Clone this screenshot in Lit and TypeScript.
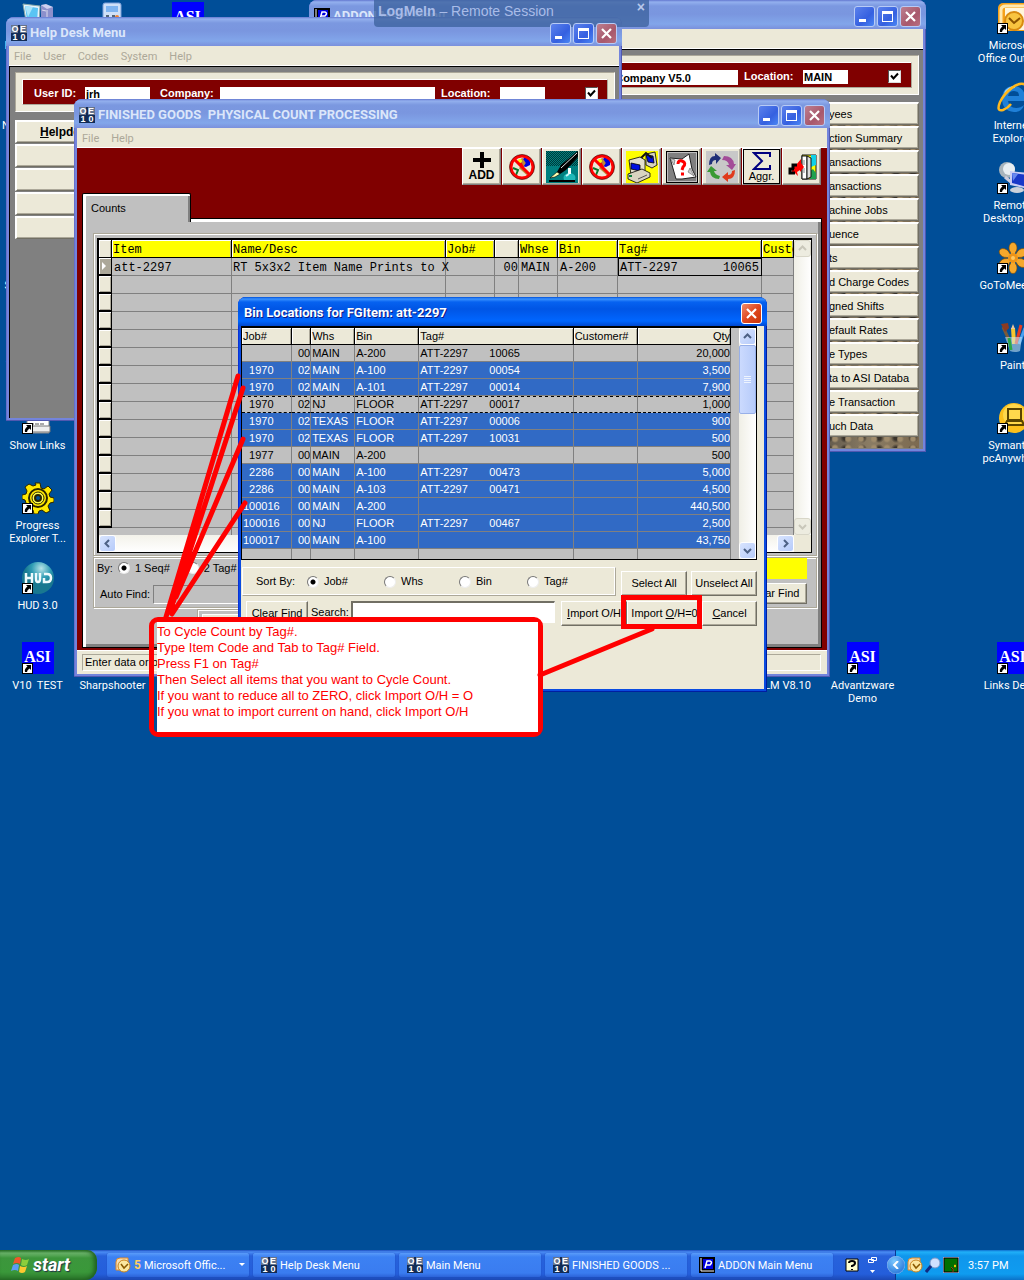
import { LitElement, html, svg, css, nothing, TemplateResult } from "lit";
import { customElement, state } from "lit/decorators.js";
import { classMap } from "lit/directives/class-map.js";
import { styleMap } from "lit/directives/style-map.js";

interface DesktopItem { col: number; row: number; label: string; icon: string; shortcut?: boolean; }
interface BinRow { job: string; seq: string; whs: string; bin: string; tag: string; num: string; qty: string; on: boolean; focus?: boolean; }

const DESKTOP: DesktopItem[] = [
  { col: 1, row: 1, label: "IE Computers", icon: "computer" },
  { col: 2, row: 1, label: "", icon: "calc" },
  { col: 3, row: 1, label: "", icon: "asi" },
  { col: 1, row: 2, label: "Network Place", icon: "none" },
  { col: 1, row: 4, label: "Sharpshooter", icon: "none" },
  { col: 1, row: 5, label: "V10 Live Site", icon: "none" },
  { col: 1, row: 6, label: "Show Links", icon: "page", shortcut: true },
  { col: 1, row: 7, label: "Progress Explorer T...", icon: "gear", shortcut: true },
  { col: 1, row: 8, label: "HUD 3.0", icon: "hud", shortcut: true },
  { col: 1, row: 9, label: "V10  TEST", icon: "asi", shortcut: true },
  { col: 2, row: 9, label: "Sharpshooter", icon: "none" },
  { col: 11, row: 9, label: "LM V8.10", icon: "none" },
  { col: 12, row: 9, label: "Advantzware Demo", icon: "asi", shortcut: true },
  { col: 14, row: 1, label: "Microsoft Office Outlook", icon: "outlook", shortcut: true },
  { col: 14, row: 2, label: "Internet Explorer", icon: "ie" },
  { col: 14, row: 3, label: "Remote Desktop C...", icon: "remote", shortcut: true },
  { col: 14, row: 4, label: "GoToMeeting", icon: "flower", shortcut: true },
  { col: 14, row: 5, label: "Paint", icon: "paint", shortcut: true },
  { col: 14, row: 6, label: "Symantec pcAnywhere", icon: "symantec", shortcut: true },
  { col: 14, row: 9, label: "Links Demo", icon: "asi", shortcut: true },
];

const BINS: BinRow[] = [
  ["", "00", "MAIN", "A-200", "ATT-2297", "10065", "20,000", 0],
  ["1970", "02", "MAIN", "A-100", "ATT-2297", "00054", "3,500", 1],
  ["1970", "02", "MAIN", "A-101", "ATT-2297", "00014", "7,900", 1],
  ["1970", "02", "NJ", "FLOOR", "ATT-2297", "00017", "1,000", 2],
  ["1970", "02", "TEXAS", "FLOOR", "ATT-2297", "00006", "900", 1],
  ["1970", "02", "TEXAS", "FLOOR", "ATT-2297", "10031", "500", 1],
  ["1977", "00", "MAIN", "A-200", "", "", "500", 0],
  ["2286", "00", "MAIN", "A-100", "ATT-2297", "00473", "5,000", 1],
  ["2286", "00", "MAIN", "A-103", "ATT-2297", "00471", "4,500", 1],
  ["100016", "00", "MAIN", "A-200", "", "", "440,500", 1],
  ["100016", "00", "NJ", "FLOOR", "ATT-2297", "00467", "2,500", 1],
  ["100017", "00", "MAIN", "A-100", "", "", "43,750", 1],
].map((r) => ({
  job: r[0] as string, seq: r[1] as string, whs: r[2] as string, bin: r[3] as string,
  tag: r[4] as string, num: r[5] as string, qty: r[6] as string, on: r[7] === 1, focus: r[7] === 2,
}));

const ADDON_BUTTONS = ["yees", "ction Summary", "ansactions", "ansactions", "achine Jobs", "uence", "ts",
  "d Charge Codes", "gned Shifts", "efault Rates", "e Types", "ta to ASI Databa", "e Transaction", "uch Data"];

const box = (n: number, body: unknown) => html`<svg class="ico" width=${n} height=${n} viewBox="0 0 ${n} ${n}" aria-hidden="true">${body}</svg>`;

const ICONS: Record<string, () => TemplateResult | typeof nothing> = {
  none: () => html`<span class="blank"></span>`,
  asi: () => html`<span class="asi">ASI</span>`,
  computer: () => box(32, svg`<path d="M1 2l17 2-1 18-13-3z" fill="#e8f2fa" stroke="#8aa"/><path d="M3 4l13 2-1 14-10-2z" fill="#5ac4f4"/><path d="M3 4l8 1-5 10z" fill="#a8e4fc"/><path d="M19 3l12 2v20l-12-4z" fill="#8c90cc"/><path d="M19 3l5-1 7 3-6 2z" fill="#cdd0f0"/><path d="M25 8v14M20 8l4 1" stroke="#dde" />`),
  calc: () => box(32, svg`<rect x="6" y="1" width="18" height="28" rx="2" fill="#cfe0f8" stroke="#7da0da"/><rect x="9" y="4" width="12" height="6" fill="#7fb4f0"/><path d="M9 14h3m3 0h3M9 18h3" stroke="#567" stroke-width="2"/><circle cx="20" cy="15" r="2" fill="#f08030"/>`),
  page: () => box(32, svg`<path d="M5 5h22v26H5z" fill="#fff" stroke="#888"/><path d="M8 10h16M8 14h16M8 18h16M8 22h14" stroke="#555" stroke-dasharray="4 1"/><path d="M3 24h25v6H3z" fill="#eee" stroke="#777"/>`),
  gear: () => box(32, svg`<g fill="#ffe800" stroke="#2a2400"><path d="M13 1h5l1 5 3 1 4-3 4 4-3 4 1 3 4 1v4l-4 1-2 3 2 5-4 2-4-3-3 1-1 3h-4l-1-4-4-1-4 2-2-4 3-4-1-3-3-1v-4l4-1 1-3-2-4 4-3 4 2 3-1z"/><circle cx="16" cy="16" r="9" stroke-width="2"/><circle cx="16" cy="16" r="6" fill="#ffff50"/><circle cx="16" cy="16" r="3" fill="#004e98" stroke-width="2"/></g>`),
  hud: () => box(32, svg`<defs><radialGradient id="hg" cx=".6" cy=".2"><stop offset="0" stop-color="#b8e4e8"/><stop offset=".6" stop-color="#2e9cb4"/><stop offset="1" stop-color="#187890"/></radialGradient></defs><circle cx="16" cy="16" r="16" fill="url(#hg)"/><path d="M4 11v10M4 16h5M10 11v10M14 11v6q0 3 2 3t2-3v-6M22 12h3q4 0 4 4t-4 4h-3v-4" fill="none" stroke="#eefafc" stroke-width="2.500"/>`),
  outlook: () => box(32, svg`<rect x="1" y="1" width="30" height="28" rx="5" fill="#f5a21c"/><path d="M8 6h24v22H8z" fill="#fff6dc"/><path d="M4 22V8q0-4 5-4h20" fill="none" stroke="#ffe9b0" stroke-width="3"/><circle cx="17" cy="19" r="9" fill="#f8c440" stroke="#d88a10" stroke-width="2"/><path d="M12 16l5 5 6-5" fill="none" stroke="#8a5200" stroke-width="2"/>`),
  ie: () => box(32, svg`<path d="M28 19H11q1 7 8 7 5 0 8-3-2 7-10 7Q5 29 5 16 6 4 17 4q12 1 11 15zM11 14h11q0-5-5-5t-6 5z" fill="#1f80d8"/><path d="M8 11q3-6 10-6" stroke="#9ad4ff" stroke-width="2" fill="none"/><path d="M29 3C21-2 8 10 3 20q-4 10 3 8 5-2 8-6" fill="none" stroke="#ffb81c" stroke-width="2.500"/>`),
  remote: () => box(32, svg`<ellipse cx="10" cy="8" rx="8" ry="8" fill="#a8b4bc"/><ellipse cx="12" cy="7" rx="6" ry="6" fill="#e8eef2"/><path d="M8 15l6 5" stroke="#ccd" stroke-width="3"/><path d="M13 9l18 2v16l-18-4z" fill="#c8ccf4"/><path d="M15 11l15 2v12l-15-4z" fill="#1838c8"/><path d="M15 11l6 1-5 7z" fill="#6888f0"/><ellipse cx="20" cy="28" rx="7" ry="3" fill="#ccd2da"/>`),
  flower: () => box(32, svg`<g fill="#f6a82c" stroke="#7a4800" stroke-width=".6">${[0, 60, 120, 180, 240, 300].map((a) => svg`<ellipse cx="16" cy="6" rx="4" ry="5.500" transform="rotate(${a} 16 16)"/>`)}</g><g stroke="#f6a82c" stroke-width="4">${[0, 60, 120].map((a) => svg`<path d="M16 9v14" transform="rotate(${a} 16 16)"/>`)}</g><circle cx="16" cy="16" r="5" fill="#ee9418"/><circle cx="16" cy="16" r="2" fill="#ffc860"/>`),
  paint: () => box(32, svg`<path d="M6 5l7 15" stroke="#7a5a38" stroke-width="3"/><path d="M4 2l7-1 1 5-4 4z" fill="#8b3b22"/><path d="M16 6l1 16" stroke="#f6c52e" stroke-width="4"/><path d="M14 7l2-5 2 5z" fill="#e8c8a0"/><path d="M24 3l-5 19" stroke="#e43b20" stroke-width="3"/><path d="M28 6l-6 16" stroke="#49a0f0" stroke-width="3"/><path d="M8 15h17l-2 14q-5 2-10 0z" fill="#cfeaf4" opacity=".55"/><path d="M12 16l2 12" stroke="#28a848" stroke-width="3"/>`),
  symantec: () => box(32, svg`<circle cx="17" cy="16" r="15" fill="#fcc01c"/><circle cx="17" cy="13" r="11" fill="#ffd84c"/><rect x="11" y="7" width="13" height="11" fill="none" stroke="#5a4400" stroke-width="2"/><path d="M10 19h15l2 4H8z" fill="none" stroke="#5a4400" stroke-width="2"/>`),
  oe: () => box(16, svg`<rect width="16" height="16" fill="#122c56"/><path d="M0 0h7v8H0zM9 0h7v8H9z" fill="#66748e"/><g font-family="Liberation Sans" font-size="9" font-weight="700" fill="#fff" text-anchor="middle"><text x="4" y="7">O</text><text x="12" y="7">E</text><text x="4" y="15">1</text><text x="12" y="15">0</text></g>`),
  pro: () => box(16, svg`<rect width="16" height="16" fill="#000"/><path d="M2 1v13h13" fill="none" stroke="#fff"/><rect x="4" y="2" width="10" height="10" fill="#0000e0"/><path d="M6 11l2-7h3q3 1 0 4H7" fill="none" stroke="#fff" stroke-width="1.500"/>`),
  mail: () => box(16, svg`<path d="M1 5q0-4 4-4h8v12H1z" fill="#f6ddb0" stroke="#e08a28"/><circle cx="9" cy="9" r="6" fill="#fbe7a0" stroke="#c88420"/><path d="M6 7l3 4 4-4" stroke="#8a5800" stroke-width="1.500" fill="none"/>`),
  flag: () => box(20, svg`<path d="M5 3q4-2 6 0L10 9Q7 7 3 9z" fill="#f0562a"/><path d="M12 4q4 2 7 0l-2 6q-3 2-6 0z" fill="#8cce3c"/><path d="M3 10q4-2 6 0L8 16Q5 14 1 16z" fill="#5c9cf4"/><path d="M10 11q4 2 7 0l-2 6q-3 2-6 0z" fill="#fcc830"/>`),
  no: () => box(32, svg`<path d="M15 10l4-4 5 3v5l-4 2-4-1z" fill="#0000e0"/><path d="M12 12l4-3 2 3-3 5 7 6" fill="none" stroke="#c0863a" stroke-width="3"/><path d="M14 11l3 5" stroke="#f00" stroke-width="2"/><circle cx="14" cy="10" r="2" fill="#ff0"/><path d="M7 17l5 2-2 5" stroke="#087a30" stroke-width="2" fill="none"/><circle cx="16" cy="16" r="11" fill="none" stroke="#f00" stroke-width="3"/><path d="M8.500 8.500l15 15" stroke="#f00" stroke-width="3"/><circle cx="16" cy="16" r="12.500" fill="none" stroke="#300" stroke-width=".6"/>`),
  pen: () => box(32, svg`<defs><pattern id="dt" width="2" height="2" patternUnits="userSpaceOnUse"><rect width="2" height="2" fill="#008080"/><path d="M0 0h1v1H0zM1 1h1v1H1z" fill="#003838"/></pattern></defs><rect width="32" height="32" fill="#008080"/><rect width="32" height="15" fill="url(#dt)"/><path d="M32 0L15 14l-4 7 3 2 6-4L32 6z" fill="#000"/><path d="M31 2L15 17" stroke="#d8e0e0"/><path d="M11 21l3 2-5 3-5 1z" fill="#ffffb0" stroke="#000" stroke-width=".6"/><path d="M3 30h26" stroke="#000" stroke-width="2"/><path d="M18 29q-2-5 4-7h3q6 2 4 7z" fill="#20b8b8"/><path d="M22 17h3v6h-3z" fill="#fff"/><path d="M20 25l3-2" stroke="#c8f8f8" stroke-width="2"/>`),
  pc: () => box(32, svg`<rect width="32" height="32" fill="#ff0"/><g stroke="#000" stroke-width=".8"><path d="M20 3l9-2 2 13-5 3-6-3z" fill="#d8d4c0"/><path d="M20 4l7 1 1 7-6-1z" fill="#0010e0"/><path d="M14 8l6-6 6 5" fill="none" stroke="#111" stroke-width="2"/><path d="M3 9l11-3 5 3v13l-14 2z" fill="#e4e0cc"/><path d="M5 12l9 2v6l-9-2z" fill="#0010e0"/><path d="M2 23l14-5 8 4v4l-13 6-9-4z" fill="#d8d4c0"/></g><path d="M3 25h3" stroke="#0a8040" stroke-width="2"/><path d="M12 28l9-4" stroke="#555"/>`),
  ask: () => box(32, svg`<path d="M0 0h32v32H0z" fill="#000"/><path d="M1 1h30v30H1z" fill="#c0c0c0"/><path d="M2 2h28v28H2z" fill="#808080"/><path d="M4 7l12 1 7-5 3 15 4 8-14 2-6 0z" fill="#fff" stroke="#222"/><path d="M24 17l4 8-6-4zM4 7l5 2-1 5z" fill="#ccc" stroke="#444" stroke-width=".5"/><path d="M12 13q0-4 4-3 5 2 1 6l-1 3M15 23h3" fill="none" stroke="#f00" stroke-width="3"/>`),
  cycle: () => box(32, svg`<rect width="32" height="32" fill="#c8c8c8"/><path d="M3 14Q3 5 9 5V2l6 5-5 6V9Q6 9 6 13z" fill="#1f2f78"/><path d="M18 5q9 0 10 8h2l-4 6-6-5h3q-1-5-7-5z" fill="#a34c98"/><path d="M29 19q0 9-7 9v3l-6-5 6-5v3q4 0 4-4z" fill="#e03a1c"/><path d="M13 28q-8 0-9-7H1l4-6 6 5H8q1 4 6 5z" fill="#3a9a34"/>`),
  door: () => box(32, svg`<path d="M16 4h14v24H16z" fill="#ff0" stroke="#111"/><path d="M25 4h5v10l-5 2z" fill="#10d0e8"/><path d="M24 20l3-2 3 4v6h-6z" fill="#20a050"/><path d="M16 5h5v23h-5z" fill="#fff" stroke="#111"/><path d="M21 5l4 2v19l-4 2z" fill="#ddd" stroke="#111"/><path d="M18 9v14" stroke="#888" stroke-dasharray="5 3"/><path d="M10 14l5-6v4l3 4-4 5v-2l-3 2 1 4-3-3-3-1v-6z" fill="#f00"/><path d="M11 14H7v4H8M7 18H4v4h5" fill="none" stroke="#000" stroke-width="3"/>`),
  help: () => box(16, svg`<path d="M3 2h12v12H3z" fill="#ffffd0" stroke="#000"/><path d="M6 6q0-2 3-2t3 2q0 2-3 3v1M9 12v1" fill="none" stroke="#000" stroke-width="2"/>`),
  glass: () => box(16, svg`<circle cx="10" cy="6" r="5" fill="#cfe0ff" stroke="#7f98c8"/><path d="M6 9l-5 6" stroke="#122a80" stroke-width="3"/>`),
  screen: () => box(16, svg`<rect width="16" height="16" fill="#dce"/><rect x="1" y="1" width="14" height="14" fill="#007000" stroke="#000"/><path d="M8 10l2 2v3M12 7v4" stroke="#a03c10"/><circle cx="12" cy="9" r="1" fill="#ff0"/>`),
};

@customElement("app-root")
export class AppRoot extends LitElement {
  @state() private sort = "Job#";

  static styles = css`
    :host { display: flex; flex-direction: column; min-height: 100vh; background: #004e98; font: 11px/13px "Liberation Sans", Arial, sans-serif; color: #000; overflow: hidden; }
    *, *::before, *::after { box-sizing: border-box; }
    button, input { font: inherit; color: inherit; margin: 0; padding: 0; border: 0; border-radius: 0; background: none; outline: none; }
    svg { display: block; flex: none; }
    u { text-underline-offset: 1px; }
    .desktop { position: relative; flex: 1; overflow: hidden; }
    .grid { display: grid; grid-template-columns: repeat(14, 75px); grid-auto-rows: 80px; padding-top: 2px; }
    .item { display: flex; flex-direction: column; align-items: center; gap: 5px; color: #fff; font: 11px/13px Roboto, Tahoma, sans-serif; text-align: center; white-space: pre-wrap; text-decoration: none; }
    .pic { position: relative; width: 32px; height: 32px; }
    .cut { position: absolute; left: 0; bottom: 0; background: #fff; border: 1px solid #000; }
    .blank { display: block; width: 32px; height: 32px; }
    .asi { display: block; width: 32px; height: 32px; background: #00f; color: #fff; font: 700 16px/30px "Liberation Serif", serif; text-align: center; }

    .win { position: absolute; display: flex; flex-direction: column; padding: 0 3px 3px; border-radius: 8px 8px 0 0; background: #7384dc; box-shadow: inset -1px -1px #5058b0, inset 1px 0 #6670cc; }
    .titlebar { display: flex; align-items: center; gap: 2px; height: 29px; margin: 0 -3px; padding: 3px 5px 0; border-radius: 8px 8px 0 0; background: linear-gradient(#6478d0 0, #93b0ee 2px, #7b98e0 6px, #7a96df 14px, #82a6ea 24px, #7a90dc 29px); }
    .caption { flex: 1; padding-left: 1px; font: 700 13px/16px Roboto, "Trebuchet MS", sans-serif; color: #dbe6fa; white-space: pre; }
    .tbtn { display: flex; align-items: center; justify-content: center; width: 21px; height: 21px; border: 1px solid #b8cbf6; border-radius: 3px; background: linear-gradient(135deg, #5c82ec, #3560e0 60%, #4a86f4); }
    .tbtn.x { background: linear-gradient(135deg, #bd7f90, #a8586c 60%, #b96f80); }
    .menubar { display: flex; gap: 12px; height: 20px; padding: 2px 5px 0; background: #ece9d8; border-bottom: 1px solid #fff; color: #aca899; font: 11px/13px Roboto, Tahoma, sans-serif; }
    .gray { flex: 1; background: #808080; border: solid #000; border-width: 1px 0 0 1px; padding: 5px 4px 0 5px; }
    .card { height: 40px; padding: 6px; background: #ece9d8; border: 1px solid; border-color: #aca899 #fff #fff #aca899; }
    .login { display: grid; grid-template-columns: 51px 75px 60px 221px 59px 85px 13px; height: 26px; padding: 7px 0 0 11px; background: #800000; border: 1px solid; border-color: #fff #aca899 #aca899 #fff; color: #fff; font-weight: 700; white-space: nowrap; }
    .login input[type="text"] { height: 14px; padding-left: 1px; background: #fff; color: #000; }
    .w65 { width: 65px; } .w215 { width: 215px; } .w45 { width: 45px; }
    .login input.far { text-align: right; padding-right: 47px; height: 15px; }
    .check { position: relative; display: block; appearance: none; width: 13px; height: 13px; background: #fff url("data:image/svg+xml,%3Csvg xmlns='http://www.w3.org/2000/svg' viewBox='0 0 11 11'%3E%3Cpath d='M2 4.500l2.500 3L9 2.500' fill='none' stroke='%23000' stroke-width='2'/%3E%3C/svg%3E") center/11px; border: 1px solid; border-color: #555 #ddd #ddd #555; }
    .btn { display: flex; align-items: center; justify-content: center; background: #ece9d8; border: 1px solid; border-color: #fff #716f64 #716f64 #fff; box-shadow: inset -1px -1px #aca899; white-space: nowrap; }

    .addon { left: 309px; top: 0; width: 617px; height: 452px; }
    .choices { display: flex; flex-direction: column; gap: 1px; width: 100px; height: 346px; margin: 7px 0 0 auto; padding-bottom: 9px;
      background: radial-gradient(circle at 3px 4px, #a08c6c 0 2px, transparent 4px) 0 0/13px 9px, radial-gradient(circle at 9px 6px, #3a342c 0 2px, transparent 5px) 0 0/17px 11px, linear-gradient(90deg, #5c5448, #8a7c64 50%, #7c6a50); }
    .choices .btn { flex: none; height: 23px; justify-content: flex-start; padding-left: 9px; border-top-width: 2px; }
    .helpdesk { left: 6px; top: 17px; width: 616px; height: 404px; }
    .helpdesk .tbtn { position: relative; z-index: 1; }
    .side { display: flex; flex-direction: column; gap: 1px; width: 100px; margin-top: 8px; }
    .side .btn { height: 23px; justify-content: flex-start; padding-left: 23px; font-weight: 700; font-size: 12px; border-top-width: 2px; border-left-width: 2px; }
    .logme { position: absolute; left: 374px; top: 0; width: 275px; height: 27px; padding: 3px 4px; display: flex; border-radius: 0 0 4px 4px; background: rgba(62, 100, 160, .8); color: #a9bce8; font-size: 14px; line-height: 16px; }
    .logme span { flex: 1; }
    .logme button { align-self: flex-start; font: 700 14px/8px "Liberation Sans", sans-serif; color: #b9c8ea; }

    .goods { left: 74px; top: 99px; width: 756px; height: 578px; }
    .maroon { flex: 1; display: flex; flex-direction: column; background: #800000; padding: 0 5px 2px; }
    .tools { display: flex; justify-content: flex-end; gap: 1px; height: 37px; padding-right: 1px; }
    .tool { display: flex; flex-direction: column; align-items: center; justify-content: center; gap: 1px; width: 39px; height: 37px; background: #ece9d8; border: 1px solid; border-color: #fff #808080 #808080 #fff; box-shadow: inset -1px -1px #aca899; font-size: 11px; line-height: 11px; }
    .tool.add { font-weight: 700; font-size: 12px; }
    .tool.dark { outline: 1px solid #000; outline-offset: -2px; }
    .tab { align-self: flex-start; position: relative; z-index: 1; width: 109px; height: 29px; margin-top: 8px; margin-bottom: -4px; padding: 8px 0 0 8px; background: #c0c0c0; border: 1px solid #000; border-bottom: 0; border-radius: 2px 2px 0 0; box-shadow: inset 3px 2px #fff, inset -2px 0 #808080; font-size: 11px; }
    .sheet { flex: 1; padding: 14px 4px 0 10px; background: #c0c0c0; border: 1px solid #000; box-shadow: inset 3px 3px #fff, inset -3px -3px #808080; }
    .frame { border: 1px solid #aca899; box-shadow: inset 1px 1px #fff, 1px 1px #fff; }
    .frame.one { height: 323px; padding: 4px 4px 0 3px; }
    .frame.two { height: 51px; margin-top: 1px; display: flex; justify-content: space-between; }
    .frame.three { width: 90px; height: 30px; margin: 1px 0 0 104px; padding: 4px; }
    .frame.three .btn { width: 80px; height: 22px; }
    .browse { border: solid #000; border-width: 2px 1px 1px 2px; background: #c0c0c0; }
    .split { display: flex; }
    .vp { flex: 1; min-width: 0; overflow: hidden; background: #c0c0c0; }
    table { border-collapse: separate; border-spacing: 0; table-layout: fixed; width: 100%; }
    th, td { padding: 0 0 0 2px; text-align: left; font-weight: 400; white-space: pre; overflow: hidden; border: solid #808080; border-width: 0 1px 1px 0; }
    .right { text-align: right; }
    .counts { font: 12px/14px "Liberation Mono", "Courier New", monospace; }
    .counts tr { height: 18px; }
    .counts thead th, .counts tbody tr:not(.part) td { padding-top: 2px; }
    .counts thead th { background: #ff0; box-shadow: inset 1px 1px #fff, inset -1px 0 #aca899; border-color: #000; padding-left: 1px; }
    .counts thead th.plain { background: #ece9d8; }
    .counts td.over { overflow: visible; padding-left: 1px; }
    .counts tbody th { height: 18px; padding: 0; background: #ece9d8; border-color: #000; border-bottom-width: 2px; box-shadow: inset 1px 1px #fff, inset -1px -1px #aca899; }
    .counts tbody th.cur { background: #aca899; }
    .counts tr.part { height: 7px; } .counts tr.part td { height: 7px; border-bottom: 0; line-height: 6px; } .counts tr.part th { height: 7px; background: #c0c0c0; box-shadow: none; border: 0; line-height: 6px; }
    .counts .cell { outline: 1px solid #000; outline-offset: -1px; }
    .pair { display: flex; justify-content: space-between; padding-right: 2px; }
    .vbar { display: flex; flex-direction: column; justify-content: space-between; width: 17px; flex: none; background: linear-gradient(90deg, #f0efe6, #fff); }
    .hbar { display: flex; justify-content: space-between; height: 17px; padding-right: 17px; background: linear-gradient(90deg, transparent calc(100% - 17px), #ece9d8 0), linear-gradient(#f3f2ea, #fff); }
    .arrow { flex: none; display: flex; align-items: center; justify-content: center; width: 17px; height: 17px; border: 1px solid #fff; border-radius: 3px; background: linear-gradient(135deg, #d8e4fe, #b6cbfa); color: #4d6185; }
    .arrow.off { background: #edece0; color: #c9c7ba; border-color: #d8d6c8; }
    .thumb { width: 17px; height: 69px; margin-bottom: auto; display: flex; align-items: center; justify-content: center; background: linear-gradient(90deg, #cbdafe, #b6cbfa); border: 1px solid #98b0e8; border-radius: 2px; }
    .by { display: flex; align-items: center; gap: 5px; height: 20px; padding-left: 3px; }
    label { white-space: nowrap; }
    .radio { appearance: none; flex: none; width: 12px; height: 12px; border-radius: 50%; background: #fff; border: 1px solid; border-color: #777 #eee #eee #777; }
    .radio:checked { background: radial-gradient(#000 0 2px, #fff 3px); }
    .opt { display: flex; align-items: center; gap: 5px; }
    .by .opt + .opt { margin-left: 12px; }
    .find { display: flex; align-items: center; gap: 3px; height: 20px; margin-top: 6px; padding-left: 6px; }
    .find input { width: 140px; height: 19px; border: 1px solid; border-color: #808080 #fff #fff #808080; }
    .yell { display: flex; flex-direction: column; width: 120px; gap: 4px; margin: 0 9px 0 0; }
    .yell div { height: 21px; background: #ff0; }
    .yell .btn { height: 21px; align-self: flex-end; width: 66px; }
    .status { display: flex; height: 24px; margin: 0; padding: 3px 6px 3px 5px; background: #ece9d8; border-top: 1px solid #fff; }
    .status span { flex: 1; padding: 1px 2px; border: 1px solid; border-color: #aca899 #fff #fff #aca899; }

    .dialog { left: 238px; top: 297px; width: 529px; height: 395px; background: #0a4be0; box-shadow: inset -1px -1px #001ea0, inset 1px 0 #0831d9; }
    .dialog .titlebar { background: linear-gradient(#0050d8 0, #3a92ff 2px, #0662f0 5px, #0055e5 12px, #0066ff 24px, #0048d0 29px); }
    .dialog .caption { color: #fff; text-shadow: 1px 1px #0a1883; }
    .dialog .tbtn.x { border-color: #fff; background: linear-gradient(135deg, #f08c6c, #e04820 50%, #c83408); }
    .body { flex: 1; background: #ece9d8; }
    .dialog .browse { margin-right: 7px; border-width: 2px 1px 1px 1px; }
    .bins tr { height: 17px; }
    .bins th { background: #ece9d8; border-color: #000; box-shadow: inset 1px 1px #fff, inset -1px 0 #aca899; padding-left: 1px; }
    .bins td { padding-left: 1px; }
    .bins th.right, .bins td.right { padding-right: 0; padding-left: 0; }
    .bins tr.on td { background: #316ac5; color: #fff; }
    .bins tr.focus td { border-bottom: 1px dashed #000; box-shadow: none; background: linear-gradient(90deg, #000 50%, transparent 0) 0 0/6px 1px repeat-x #c0c0c0; }
    .bins tr.part { height: 10px; } .bins tr.part td { height: 10px; border-bottom: 0; line-height: 9px; }
    .tag { display: inline-block; width: 69px; }
    .gutter { width: 8px; background: #c0c0c0; }
    .row { display: flex; align-items: flex-end; }
    .row.a { gap: 4px; padding: 7px 7px 0 1px; }
    .row.b { padding: 5px 7px 0 5px; align-items: flex-start; }
    .sort { flex: 1; display: grid; grid-template-columns: 51px 77px 75px 68px 60px; align-items: center; height: 29px; margin-right: 1px; padding-left: 13px; border: 1px solid; border-color: #fff #aca899 #aca899 #fff; box-shadow: inset -1px -1px #fff; }
    .row .btn { height: 25px; width: 66px; }
    .row .btn.c { width: 62px; } .row .btn.z { width: 75px; } .row .btn.k { width: 55px; }
    .row.b label { width: 43px; padding: 5px 0 0 3px; }
    .row.b input { flex: 1; min-width: 0; height: 22px; margin-right: 6px; background: #fff; border: solid; border-width: 2px 1px 1px 2px; border-color: #716f64 #fff #fff #716f64; }

    .marks { position: absolute; left: 0; top: 0; pointer-events: none; }
    .target { position: absolute; left: 621px; top: 595px; width: 81px; height: 34px; border: 5px solid #f00; pointer-events: none; }
    .callout { position: absolute; left: 149px; top: 617px; width: 394px; padding: 2px 0 0 3px; border: 5px solid #f00; border-radius: 9px; }
    .callout p { margin: 0; padding-bottom: 12px; background: #fff; color: #f00; font-size: 13px; line-height: 16px; white-space: nowrap; box-shadow: 0 -2px #fff; }

    .taskbar { display: flex; height: 30px; background: linear-gradient(#1f4fc0 0, #4a8cf4 2px, #2762dc 6px, #245edb 24px, #1c48b4 30px); font: 11px/13px Roboto, Tahoma, sans-serif; color: #fff; }
    .start { display: flex; align-items: center; gap: 3px; width: 97px; padding: 0 10px; border-radius: 0 10px 12px 0; background: linear-gradient(#2c7a2c 0, #6cb46c 3px, #3c963c 8px, #3a983a 22px, #2a742a 30px); box-shadow: inset -3px 0 4px #1f5f1f; font: italic 700 18px/20px Roboto, "Trebuchet MS", sans-serif; text-shadow: 1px 1px 1px #234; }
    .tasks { flex: 1; display: flex; gap: 4px; padding: 3px 0 3px 10px; }
    .task { flex: 1; min-width: 0; max-width: 142px; display: flex; align-items: center; gap: 3px; padding: 0 4px 0 8px; border-radius: 2px; background: linear-gradient(#5a9cfa 0, #3c81f3 4px, #3a7cf0 20px, #2c62d8 24px); box-shadow: 0 0 1px #1c3fa0; }
    .task span { flex: 1; text-align: left; white-space: nowrap; overflow: hidden; }
    .task b { color: #ffcf60; font-size: 12px; }
    .quick { display: flex; align-items: center; gap: 9px; width: 61px; padding-left: 9px; }
    .tray { display: flex; align-items: center; gap: 2px; width: 129px; background: linear-gradient(#1070d0 0, #20b0f8 2px, #0f96ec 6px, #0f9cf0 24px, #0b72c8 30px); border-left: 1px solid #0a3890; }
    .tray time { margin-left: 7px; white-space: nowrap; }
    .back { flex: none; display: flex; align-items: center; justify-content: center; width: 18px; height: 18px; margin-left: -9px; border-radius: 50%; background: radial-gradient(circle at 40% 30%, #7cc8ff, #1060d0); box-shadow: inset 0 0 1px #fff; }
  `;

  private ctl(only = false) {
    const b = (n: string, cls: string, s: unknown) => html`<button class="tbtn ${cls}" aria-label=${n}><svg width="15" height="15" viewBox="0 0 15 15">${s}</svg></button>`;
    return html`${only ? nothing : html`${b("Minimize", "", svg`<path d="M2 10h7v3H2z" fill="#fff"/>`)}${b("Maximize", "", svg`<path d="M2 2h11v11H2z M3 5v7h9V5z" fill="#fff" fill-rule="evenodd"/>`)}`}${b("Close", "x", svg`<path d="M3 3l9 9M12 3l-9 9" stroke="#fff" stroke-width="2.200"/>`)}`;
  }

  private title(icon: string, text: string, only = false) {
    return html`<div class="titlebar">${icon ? ICONS[icon]() : nothing}<span class="caption">${text}</span>${this.ctl(only)}</div>`;
  }

  private menu(items: string[]) {
    return html`<nav class="menubar">${items.map((i) => html`<button>${i}</button>`)}</nav>`;
  }

  private login(id: string, user: string, company: string, loc: string) {
    return html`<div class="card"><div class="login">
      <label for="${id}u">User ID:</label><input id="${id}u" class="w65" type="text" .value=${user}>
      <label for="${id}c">Company:</label><input id="${id}c" class="w215 ${company ? "far" : ""}" type="text" .value=${company}>
      <label for="${id}l">Location:</label><input id="${id}l" class="w45" type="text" .value=${loc}>
      <input class="check" type="checkbox" aria-label="Active" checked>
    </div></div>`;
  }

  private arrow(dir: "up" | "down" | "left" | "right", off = false) {
    const turn = { up: 0, right: 90, down: 180, left: 270 }[dir];
    return html`<button class="arrow ${off ? "off" : ""}" aria-label="Scroll ${dir}"><svg width="9" height="9" viewBox="0 0 9 9"><path transform="rotate(${turn} 4.500 4.500)" d="M1 6l3.500-3.500L8 6" fill="none" stroke="currentColor" stroke-width="2"/></svg></button>`;
  }

  private counts() {
    const widths = [13, 120, 214, 49, 24, 39, 60, 144, 32];
    const blank = (part = false) => html`<tr class=${part ? "part" : ""}><th></th>${widths.slice(1).map(() => html`<td></td>`)}</tr>`;
    return html`<div class="browse"><div class="split"><div class="vp"><table class="counts">
      <colgroup>${widths.map((w) => html`<col style=${styleMap({ width: `${w}px` })}>`)}</colgroup>
      <thead><tr><th class="plain"></th><th>Item</th><th>Name/Desc</th><th>Job#</th><th class="plain"></th><th>Whse</th><th>Bin</th><th>Tag#</th><th>Custo</th></tr></thead>
      <tbody>
        <tr><th class="cur"><svg width="11" height="12" viewBox="0 0 11 12"><path d="M3 2l4 4-4 4z" fill="#fff"/></svg></th><td>att-2297</td><td class="over">RT 5x3x2 Item Name Prints to X</td><td></td><td class="right">00</td><td>MAIN</td><td>A-200</td><td class="cell"><div class="pair"><span>ATT-2297</span><span>10065</span></div></td><td></td></tr>
        ${Array.from({ length: 14 }, () => blank())}${blank(true)}
      </tbody></table></div>
      <div class="vbar">${this.arrow("up", true)}${this.arrow("down", true)}</div></div>
      <div class="hbar">${this.arrow("left")}${this.arrow("right")}</div></div>`;
  }

  private goods() {
    const t = (name: string, label: string) => html`<button class="tool" aria-label=${label}>${ICONS[name]()}</button>`;
    return html`<section class="win goods">
      ${this.title("oe", "FINISHED GOODS  PHYSICAL COUNT PROCESSING")}
      ${this.menu(["File", "Help"])}
      <div class="maroon">
        <div class="tools">
          <button class="tool add"><svg width="20" height="17" viewBox="0 0 20 17"><path d="M1 8h18M10 0v16" stroke="#000" stroke-width="4"/></svg>ADD</button>
          ${t("no", "Delete")}${t("pen", "Note")}${t("no", "Reset")}${t("pc", "Transfer")}${t("ask", "Help")}${t("cycle", "Refresh")}
          <button class="tool dark"><svg width="20" height="18" viewBox="0 0 20 18"><path d="M18 5V1H2l8 8-8 8h16v-4" fill="none" stroke="#000080" stroke-width="2"/></svg>Aggr.</button>
          ${t("door", "Exit")}
        </div>
        <div class="tab">Counts</div>
        <div class="sheet">
          <div class="frame one">${this.counts()}</div>
          <div class="frame two">
            <div>
              <div class="by"><span>By:</span><label class="opt"><input class="radio" type="radio" name="by" checked>1 Seq#</label><label class="opt"><input class="radio" type="radio" name="by">2 Tag#</label></div>
              <div class="find"><label for="af">Auto Find:</label><input id="af" type="text"></div>
            </div>
            <div class="yell"><div></div><button class="btn">Clear Find</button></div>
          </div>
          <div class="frame three"><button class="btn">Update</button></div>
        </div>
      </div>
      <div class="status"><span>Enter data or press ESC to end.</span></div>
    </section>`;
  }

  private dialog() {
    const widths = [50, 19, 44, 64, 154, 64, 93];
    return html`<section class="win dialog">
      ${this.title("", "Bin Locations for FGItem: att-2297", true)}
      <div class="body">
        <div class="browse split"><div class="vp"><table class="bins">
          <colgroup>${widths.map((w) => html`<col style=${styleMap({ width: `${w}px` })}>`)}</colgroup>
          <thead><tr><th>Job#</th><th></th><th>Whs</th><th>Bin</th><th>Tag#</th><th>Customer#</th><th class="right">Qty</th></tr></thead>
          <tbody>${BINS.map((r) => html`<tr class=${classMap({ on: r.on, focus: !!r.focus })}><td>${r.job.padStart(6, "\u00a0")}</td><td class="right">${r.seq}</td><td>${r.whs}</td><td>${r.bin}</td><td><span class="tag">${r.tag}</span>${r.num}</td><td></td><td class="right">${r.qty}</td></tr>`)}
          <tr class="part">${widths.map(() => html`<td></td>`)}</tr></tbody></table></div>
          <div class="gutter"></div>
          <div class="vbar">${this.arrow("up")}<div class="thumb"><svg width="7" height="8" viewBox="0 0 7 8"><path d="M0 .5h7M0 2.500h7M0 4.500h7M0 6.500h7" stroke="#eef4fe"/></svg></div>${this.arrow("down")}</div>
        </div>
        <div class="row a">
          <div class="sort"><span>Sort By:</span>${["Job#", "Whs", "Bin", "Tag#"].map((s) => html`<label class="opt"><input class="radio" type="radio" name="sort" .checked=${this.sort === s} @change=${() => (this.sort = s)}>${s}</label>`)}</div>
          <button class="btn">Select All</button><button class="btn">Unselect All</button>
        </div>
        <div class="row b">
          <button class="btn c">Clear Find</button><label for="se">Search:</label><input id="se" type="text">
          <button class="btn"><span><u>I</u>mport O/H</span></button><button class="btn z"><span>Import <u>O</u>/H=0</span></button><button class="btn k"><span><u>C</u>ancel</span></button>
        </div>
      </div>
    </section>`;
  }

  render() {
    return html`
      <main class="desktop">
        <div class="grid">${DESKTOP.map((d) => html`<a class="item" href="#" style=${styleMap({ gridColumn: `${d.col}`, gridRow: `${d.row}` })}><span class="pic">${ICONS[d.icon]()}${d.shortcut ? html`<svg class="cut" width="11" height="11" viewBox="0 0 9 9"><path d="M3 1h5v5L6.500 4.500Q4 6 4 8H2q-1-3 2.500-5.500z" fill="#000"/></svg>` : nothing}</span><span>${d.label}</span></a>`)}</div>
        <section class="win addon">
          ${this.title("pro", "ADDON Main Menu")}${this.menu([])}
          <div class="gray">${this.login("a", "", "Company V5.0", "MAIN")}
            <div class="choices">${ADDON_BUTTONS.map((b) => html`<button class="btn">${b}</button>`)}</div></div>
        </section>
        <section class="win helpdesk">
          ${this.title("oe", "Help Desk Menu")}${this.menu(["File", "User", "Codes", "System", "Help"])}
          <div class="gray">${this.login("h", "jrh", "", "")}
            <div class="side"><button class="btn"><span><u>H</u>elpdesk</span></button>${[1, 2, 3, 4].map((n) => html`<button class="btn" aria-label="Choice ${n}"></button>`)}</div></div>
        </section>
        <div class="logme"><span><b>LogMeIn</b> – Remote Session</span><button aria-label="Close session">×</button></div>
        ${this.goods()}
        ${this.dialog()}
        <div class="target"></div>
        <div class="callout"><p>To Cycle Count by Tag#.<br>Type Item Code and Tab to Tag# Field.<br>Press F1 on Tag#<br>Then Select all items that you want to Cycle Count.<br>If you want to reduce all to ZERO, click Import O/H = O<br>If you wnat to import current on hand, click Import O/H</p></div>
        <svg class="marks" width="760" height="740" viewBox="0 0 760 740"><path d="M238 376L166 617M243 388L170 612M243 439L176 597M245 503L172 614M540 675L652 629" fill="none" stroke="#f00" stroke-width="5" stroke-linecap="round"/></svg>
      </main>
      <footer class="taskbar">
        <button class="start">${ICONS.flag()}start</button>
        <div class="tasks">
          <button class="task">${ICONS.mail()}<b>5</b><span>Microsoft Offic...</span><svg width="6" height="4" viewBox="0 0 6 4"><path d="M0 0h6L3 3z" fill="#fff"/></svg></button>
          <button class="task">${ICONS.oe()}<span>Help Desk Menu</span></button>
          <button class="task">${ICONS.oe()}<span>Main Menu</span></button>
          <button class="task">${ICONS.oe()}<span>FINISHED GOODS ...</span></button>
          <button class="task">${ICONS.pro()}<span>ADDON Main Menu</span></button>
        </div>
        <div class="quick">${ICONS.help()}<svg width="9" height="18" viewBox="0 0 9 18"><path d="M3.500 1.500h5v3h-5zM.5 3.500h5v3h-5z" fill="#245edb" stroke="#fff"/><path d="M2 14h5l-2.500 3z" fill="#fff"/></svg></div>
        <div class="tray"><button class="back" aria-label="Show hidden icons"><svg width="8" height="8" viewBox="0 0 8 8"><path d="M6 0L2 4l4 4" fill="none" stroke="#fff" stroke-width="2"/></svg></button>${ICONS.mail()}${ICONS.glass()}${ICONS.screen()}<time>3:57 PM</time></div>
      </footer>`;
  }
}
